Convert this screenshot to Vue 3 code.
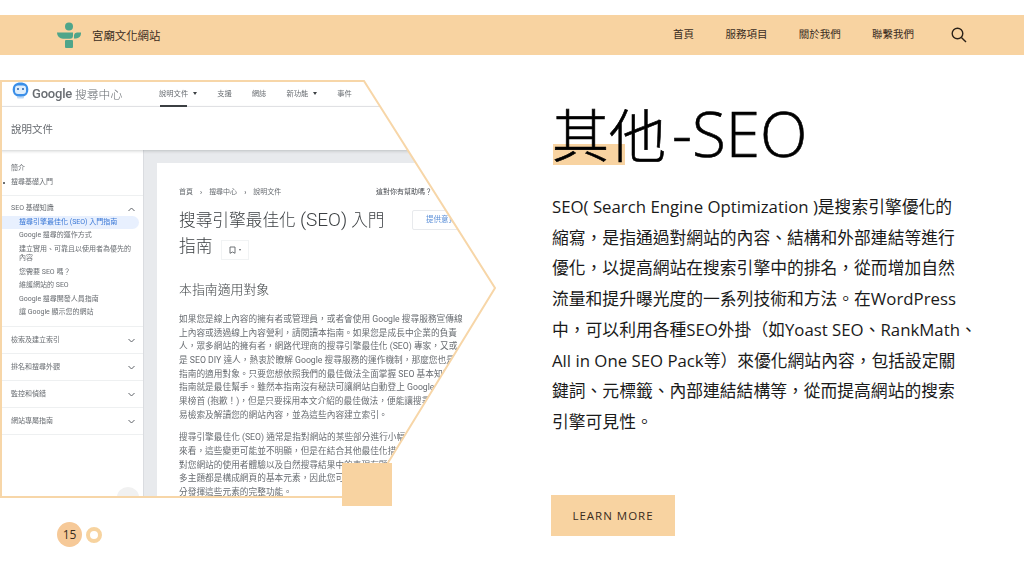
<script setup>
const navLinks = ['首頁', '服務項目', '關於我們', '聯繫我們']

const bodyLines = [
  'SEO( Search Engine Optimization )是搜索引擎優化的',
  '縮寫\uFF0C是指通過對網站的內容、結構和外部連結等進行',
  '優化\uFF0C以提高網站在搜索引擎中的排名\uFF0C從而增加自然',
  '流量和提升曝光度的一系列技術和方法。在WordPress',
  '中\uFF0C可以利用各種SEO外掛\uFF08如Yoast SEO、RankMath、',
  'All in One SEO Pack等\uFF09來優化網站內容\uFF0C包括設定關',
  '鍵詞、元標籤、內部連結結構等\uFF0C從而提高網站的搜索',
  '引擎可見性。'
]

const guideItems = [
  { text: '搜尋引擎最佳化 (SEO) 入門指南', active: true },
  { text: 'Google 搜尋的運作方式' },
  { text: '建立實用、可靠且以使用者為優先的內容', tall: true },
  { text: '您需要 SEO 嗎\uFF1F' },
  { text: '維護網站的 SEO' },
  { text: 'Google 搜尋開發人員指南' },
  { text: '讓 Google 顯示您的網站' }
]

const closedGroups = ['檢索及建立索引', '排名和搜尋外觀', '監控和偵錯', '網站專屬指南']

const helpfulText = '這對你有幫助嗎\uFF1F'

const paraOne = [
  '如果您是線上內容的擁有者或管理員\uFF0C或者會使用 Google 搜尋服務宣傳線',
  '上內容或透過線上內容營利\uFF0C請閱讀本指南。如果您是成長中企業的負責',
  '人\uFF0C眾多網站的擁有者\uFF0C網路代理商的搜尋引擎最佳化 (SEO) 專家\uFF0C又或',
  '是 SEO DIY 達人\uFF0C熱衷於瞭解 Google 搜尋服務的運作機制\uFF0C那麼您也是本',
  '指南的適用對象。只要您想依照我們的最佳做法全面掌握 SEO 基本知識\uFF0C本',
  '指南就是最佳幫手。雖然本指南沒有秘訣可讓網站自動登上 Google 搜尋結',
  '果榜首 (抱歉\uFF01)\uFF0C但是只要採用本文介紹的最佳做法\uFF0C便能讓搜尋引擎更容',
  '易檢索及解讀您的網站內容\uFF0C並為這些內容建立索引。'
]

const paraTwo = [
  '搜尋引擎最佳化 (SEO) 通常是指對網站的某些部分進行小幅修改。就個別角度',
  '來看\uFF0C這些變更可能並不明顯\uFF0C但是在結合其他最佳化措施後\uFF0C可能會',
  '對您網站的使用者體驗以及自然搜尋結果中的表現有顯著影響。本指南的許',
  '多主題都是構成網頁的基本元素\uFF0C因此您可能已經很熟悉\uFF0C但您可能尚未充',
  '分發揮這些元素的完整功能。'
]
</script>

<template>
  <div class="slide" lang="zh-Hant-TW">
    <header class="topbar">
      <div class="brand">
        <svg class="logo" width="24" height="26" viewBox="0 0 24 26">
          <circle cx="12" cy="4.6" r="4" fill="#4fa58a" />
          <path d="M0 10.500h16v3.200a3 3 0 0 1-3 3H6a6 6 0 0 1-6-6z" fill="#4fa58a" />
          <path d="M17 13a3 3 0 0 1 3-2.500h4v1a5 5 0 0 1-5 5h-2z" fill="#4fa58a" />
          <rect x="8" y="18" width="8" height="8" rx="1" fill="#4fa58a" />
        </svg>
        <span class="brand-name">宮廟文化網站</span>
      </div>
      <nav class="nav">
        <a v-for="link in navLinks" :key="link">{{ link }}</a>
      </nav>
      <svg class="search" width="16" height="16" viewBox="0 0 16 16" fill="none" stroke="#2b2118" stroke-width="1.4">
        <circle cx="6.500" cy="6.500" r="5.300" />
        <path d="M10.400 10.400 15 15" />
      </svg>
    </header>

    <main class="content">
      <section class="left">
        <div class="shot-wrap">
          <div class="shot">
            <div class="gbar">
              <svg class="robot" width="17" height="17" viewBox="0 0 17 17">
                <path d="M8.500.500c4.600 0 7.800 2.400 7.800 7 0 4.600-3 7.500-7.800 7.500S.700 12.100.700 7.500c0-4.600 3.200-7 7.800-7z" fill="#3b8fe8" />
                <rect x="3" y="3.500" width="11" height="8.500" rx="3" fill="#dfeefc" />
                <circle cx="6" cy="7" r="1" fill="#2a5fa8" />
                <circle cx="11" cy="7" r="1" fill="#2a5fa8" />
                <rect x="5" y="14.500" width="7" height="2" rx="1" fill="#bcd8f5" />
              </svg>
              <span class="g-word">Google</span>
              <span class="g-center">搜尋中心</span>
              <div class="g-tabs">
                <span class="g-tab on">說明文件<i class="caret"></i></span>
                <span class="g-tab">支援</span>
                <span class="g-tab">網誌</span>
                <span class="g-tab">新功能<i class="caret"></i></span>
                <span class="g-tab">事件</span>
              </div>
            </div>
            <div class="doc-row">說明文件</div>
            <div class="doc-body">
              <aside class="side">
                <div class="side-block">
                  <div class="side-head">簡介</div>
                  <div class="side-head">搜尋基礎入門<i class="dot"></i></div>
                </div>
                <div class="side-block seo">
                  <div class="side-head">SEO 基礎知識
                    <svg class="chev" width="7" height="5" viewBox="0 0 7 5"><path d="M.500 4 3.500 1l3 3" fill="none" stroke="#5f6368" stroke-width="1" /></svg>
                  </div>
                  <div
                    v-for="item in guideItems"
                    :key="item.text"
                    class="side-item"
                    :class="{ active: item.active, tall: item.tall }"
                  >{{ item.text }}</div>
                </div>
                <div v-for="group in closedGroups" :key="group" class="side-group">
                  {{ group }}
                  <svg class="chev" width="7" height="5" viewBox="0 0 7 5"><path d="M.500 1l3 3 3-3" fill="none" stroke="#5f6368" stroke-width="1" /></svg>
                </div>
                <span class="scroll-btn"></span>
              </aside>
              <article class="card">
                <div class="crumbs">
                  <span>首頁</span><b>›</b><span>搜尋中心</span><b>›</b><span>說明文件</span>
                  <span class="helpful">{{ helpfulText }}</span>
                </div>
                <div class="doc-title-row">
                  <h2 class="doc-title">搜尋引擎最佳化 <span class="lat">(SEO)</span> 入門<br />指南<span class="bookmark">
                    <svg width="7" height="8" viewBox="0 0 7 8"><path d="M1 1h5v6.300L3.500 6 1 7.300z" fill="none" stroke="#5f6368" stroke-width=".9" /></svg>
                    <i class="caret small"></i></span></h2>
                  <span class="feedback">提供意見</span>
                </div>
                <h3 class="doc-sub">本指南適用對象</h3>
                <p class="doc-para">
                  <span v-for="line in paraOne" :key="line" class="doc-line">{{ line }}</span>
                </p>
                <p class="doc-para">
                  <span v-for="line in paraTwo" :key="line" class="doc-line">{{ line }}</span>
                </p>
              </article>
            </div>
          </div>
          <svg class="frame" width="500" height="430" viewBox="0 0 500 430" fill="none">
            <path d="M1 417V1h363l131 207-128 209z" stroke="#f7d6a8" stroke-width="2" />
          </svg>
          <span class="corner"></span>
        </div>
        <div class="pager">
          <span class="page-no">15</span>
          <span class="page-ring"></span>
        </div>
      </section>

      <section class="right">
        <h1 class="title"><span class="mark"></span><span class="title-text">其他<span class="title-lat">-SEO</span></span></h1>
        <div class="copy">
          <div v-for="line in bodyLines" :key="line" class="copy-line">{{ line }}</div>
        </div>
        <a class="more">LEARN MORE</a>
      </section>
    </main>
  </div>
</template>

<style>
html, body {
  margin: 0;
  background: #fff;
}
</style>

<style scoped>
.slide {
  width: 1024px;
  height: 576px;
  overflow: hidden;
  background: #fff;
  font-family: "Open Sans", "Noto Sans CJK TC", sans-serif;
  font-feature-settings: "locl" 1;
  color: #111;
  padding-top: 15px;
  box-sizing: border-box;
}

.topbar {
  height: 40px;
  background: #f8d3a1;
  display: flex;
  align-items: center;
  padding-left: 57px;
  color: #3a2c1e;
}

.brand {
  display: flex;
  align-items: center;
  gap: 11px;
}

.brand-name {
  font-size: 11.400px;
}

.nav {
  margin-left: auto;
  display: flex;
  gap: 31.300px;
  font-size: 10.500px;
  margin-bottom: 4px;
}

.search {
  margin-left: 37px;
  margin-right: 57px;
}

.content {
  display: flex;
  margin-top: 25px;
}

.left {
  width: 500px;
  flex: none;
}

.shot-wrap {
  position: relative;
  width: 500px;
  height: 417px;
}

.shot {
  width: 500px;
  height: 417px;
  overflow: hidden;
  clip-path: polygon(0 0, 364px 0, 495px 208px, 367px 417px, 0 417px);
  display: flex;
  flex-direction: column;
  font-family: Roboto, "Noto Sans CJK TC", sans-serif;
  color: #696d72;
  background: #fff;
  filter: blur(0.4px);
}

.frame {
  position: absolute;
  left: 0;
  top: 0;
}

.corner {
  position: absolute;
  left: 342px;
  top: 383px;
  width: 50px;
  height: 43px;
  background: #f8d3a1;
}

.gbar {
  height: 27px;
  flex: none;
  display: flex;
  align-items: center;
  padding-left: 12px;
  border-bottom: 1px solid #e8eaed;
  box-sizing: border-box;
}

.robot {
  margin-top: -6px;
  flex: none;
}

.g-word {
  font-size: 13px;
  font-weight: 500;
  letter-spacing: -0.2px;
  margin-left: 3px;
  width: 43px;
  flex: none;
}

.g-center {
  font-size: 11.800px;
  font-weight: 300;
  width: 84px;
  flex: none;
}

.g-tabs {
  display: flex;
  font-size: 7.300px;
  gap: 20px;
}

.g-tab {
  position: relative;
}

.g-tab.on::after {
  content: "";
  position: absolute;
  left: 1px;
  width: 27px;
  bottom: -9px;
  height: 2px;
  background: #3c4043;
}

.caret {
  display: inline-block;
  margin-left: 5px;
  width: 0;
  height: 0;
  vertical-align: 1px;
  border-left: 2.500px solid transparent;
  border-right: 2.500px solid transparent;
  border-top: 3px solid #3c4043;
}

.caret.small {
  margin-left: 3px;
  border-left-width: 1.500px;
  border-right-width: 1.500px;
  border-top-width: 2px;
  border-top-color: #5f6368;
}

.doc-row {
  height: 43px;
  flex: none;
  padding-left: 11px;
  display: flex;
  align-items: center;
  font-size: 10.500px;
  box-shadow: 0 1px 3px rgba(60, 64, 67, 0.25);
  position: relative;
  z-index: 1;
}

.doc-body {
  flex: 1;
  display: flex;
  min-height: 0;
  background: #e8eaed;
}

.side {
  width: 144px;
  flex: none;
  background: #fff;
  font-size: 7px;
  position: relative;
  border-right: 1px solid #dadce0;
  box-sizing: border-box;
  padding-top: 12px;
}

.side-block {
  border-bottom: 1px solid #eef0f1;
}

.side-block:first-child {
  padding-bottom: 6px;
}

.side-head {
  height: 13.500px;
  line-height: 13.500px;
  padding-left: 11px;
  position: relative;
}

.seo {
  padding-top: 6px;
  padding-bottom: 6px;
}

.chev {
  position: absolute;
  right: 8px;
  top: 5px;
}

.dot {
  position: absolute;
  left: 3px;
  top: 6px;
  width: 2px;
  height: 2px;
  border-radius: 50%;
  background: #3c4043;
}

.side-item {
  height: 13.500px;
  line-height: 13.500px;
  padding-left: 19px;
  padding-right: 10px;
}

.side-item.tall {
  height: 23px;
  line-height: 9.500px;
  padding-top: 2px;
  box-sizing: border-box;
}

.side-item.active {
  color: #3a78d6;
  background: #e8f0fe;
  border-radius: 0 7px 7px 0;
  width: 139px;
  box-sizing: border-box;
}

.side-group {
  height: 27px;
  line-height: 26px;
  box-sizing: border-box;
  padding-left: 11px;
  position: relative;
  border-bottom: 1px solid #eef0f1;
}

.side-group .chev {
  top: 11px;
}

.scroll-btn {
  position: absolute;
  left: 117px;
  bottom: -10px;
  width: 22px;
  height: 20px;
  border-radius: 50%;
  background: #f1f1f1;
}

.card {
  margin-left: 13px;
  margin-top: 13px;
  flex: 1;
  background: #fff;
  padding: 24px 0 0 22px;
}

.crumbs {
  font-size: 7px;
  display: flex;
  align-items: center;
  line-height: 10px;
  position: relative;
}

.crumbs b {
  margin: 0 7px;
  font-weight: 700;
}

.helpful {
  position: absolute;
  left: 197px;
  color: #4a4d52;
}

.doc-title-row {
  display: flex;
  margin-top: 10px;
}

.doc-title {
  margin: 0;
  font-size: 16.700px;
  font-weight: 300;
  line-height: 26px;
  color: #3c4043;
  white-space: nowrap;
  width: 233px;
  flex: none;
}

.lat {
  font-size: 19px;
}

.bookmark {
  display: inline-flex;
  align-items: center;
  justify-content: center;
  width: 28px;
  height: 20px;
  margin-left: 9px;
  vertical-align: -2px;
  border: 1px solid #f1f3f4;
  box-sizing: border-box;
}

.feedback {
  height: 20px;
  width: 60px;
  flex: none;
  box-sizing: border-box;
  border: 1px solid #e8eaed;
  border-radius: 2px;
  font-size: 7.500px;
  line-height: 18px;
  color: #5b8fd8;
  padding-left: 13px;
  margin-top: 3px;
}

.doc-sub {
  margin: 20px 0 0;
  font-size: 12.900px;
  font-weight: 300;
  line-height: 20px;
  color: #3c4043;
}

.doc-para {
  margin: 13px 0 0;
  font-size: 8.700px;
  line-height: 13.650px;
  white-space: nowrap;
}

.doc-para + .doc-para {
  margin-top: 9px;
}

.doc-line {
  display: block;
}

.pager {
  display: flex;
  align-items: center;
  margin: 25px 0 0 57px;
  gap: 4px;
}

.page-no {
  width: 25px;
  height: 25px;
  border-radius: 50%;
  background: #f6c998;
  font-size: 12px;
  line-height: 25px;
  text-align: center;
  color: #3a2c1e;
}

.page-ring {
  width: 16px;
  height: 16px;
  box-sizing: border-box;
  border: 4px solid #f7d39f;
  border-radius: 50%;
}

.right {
  padding-left: 52px;
  display: flex;
  flex-direction: column;
  align-items: flex-start;
}

.title {
  margin: 5px 0 0;
  font-size: 57px;
  line-height: 64px;
  padding-top: 16px;
  box-sizing: border-box;
  font-weight: 300;
  -webkit-text-stroke: 0.6px #000;
  color: #000;
  position: relative;
  white-space: nowrap;
  height: 80px;
}

.title-text {
  position: relative;
}

.title-lat {
  font-size: 62px;
  margin-left: 6px;
}

.mark {
  position: absolute;
  left: 1px;
  top: 59px;
  width: 72px;
  height: 21px;
  background: #f8d3a1;
}

.copy {
  margin-top: 27px;
  font-size: 16.800px;
  line-height: 30.700px;
  color: #1a1a1a;
  white-space: nowrap;
}

.more {
  margin-top: 57px;
  margin-left: -1px;
  width: 124px;
  height: 41px;
  background: #f8d3a1;
  display: flex;
  align-items: center;
  justify-content: center;
  font-size: 11.500px;
  letter-spacing: 1px;
  color: #3a2c1e;
}
</style>
